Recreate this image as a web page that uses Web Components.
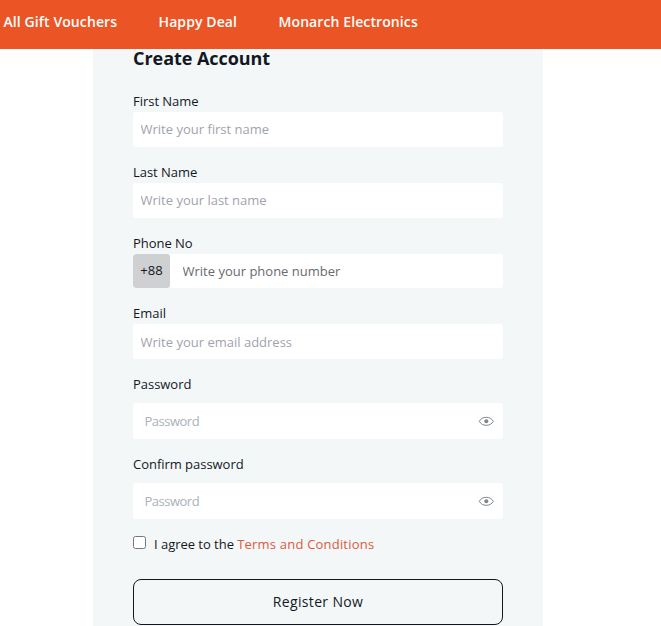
<!DOCTYPE html>
<html lang="en">
<head>
<meta charset="utf-8">
<title>Create Account</title>
<style>
body{margin:0;height:626px;overflow:hidden;background:#fff;font-family:"Open Sans","Noto Sans",sans-serif;font-size:13px;color:#14171f}
</style>
</head>
<body>
<signup-page></signup-page>
<script>
function define(name, html, setup) {
  const template = document.createElement('template');
  template.innerHTML = html;
  customElements.define(name, class extends HTMLElement {
    constructor() {
      super();
      this.attachShadow({ mode: 'open' }).appendChild(template.content.cloneNode(true));
    }
    connectedCallback() { if (setup) setup(this, this.shadowRoot); }
  });
}

define('nav-bar', `
<style>
:host{display:block;background:#eb5424;height:49px;box-sizing:border-box;padding:12px 0 0 3.5px}
nav{display:flex;gap:41.4px}
::slotted(a){color:#fff;font-size:14px;line-height:20px;font-weight:600;letter-spacing:.1px;white-space:nowrap;text-decoration:none}
</style>
<nav><slot></slot></nav>`);

define('form-field', `
<style>
:host{display:block;margin-bottom:16px}
label{display:block;height:20px;line-height:19px;letter-spacing:-.03px}
.box{display:flex;height:35px;background:#fff;border-radius:3px;overflow:hidden}
:host([prefix]) .box{height:34px}
:host([secret]) .box{height:36px;margin-top:8px}
.code{display:none;width:37px;background:#ced0d2;border-radius:3px;line-height:33px}
:host([prefix]) .code{display:block;text-align:center}
input{flex:1;min-width:0;border:0;outline:0;background:none;padding:0 8px 1px 7.5px;font:inherit;letter-spacing:0;color:inherit}
input::placeholder{color:#9fa3ad;opacity:1}
:host([type=email]) input{padding-top:1px;padding-bottom:0}
:host([prefix]) input{padding:0 8px 0 12.5px}
:host([prefix]) input::placeholder{color:#686b70}
:host([secret]) input{padding:0 8px 0 11.5px;letter-spacing:-.5px}
:host([secret]) input::placeholder{color:#a9b2b9}
svg{display:none;width:16px;height:16px;margin:10px 9px 0 0}
:host([secret]) svg{display:block}
</style>
<label for="control"></label>
<div class="box"><span class="code"></span><input id="control">
<svg viewBox="0 0 16 16" fill="none" stroke="#7d858b"><path d="M1.3 8.3C2.8 5.6 5.2 4.3 8.3 4.3S13.8 5.6 15.3 8.3C13.8 11 11.4 12.3 8.3 12.3S2.8 11 1.3 8.3Z"/><circle cx="8.3" cy="8.3" r="2" fill="#7d858b" stroke="none"/></svg></div>`,
(host, root) => {
  root.querySelector('label').textContent = host.getAttribute('label');
  root.querySelector('input').placeholder = host.getAttribute('placeholder');
  if (host.hasAttribute('secret')) root.querySelector('input').type = 'password';
  root.querySelector('.code').textContent = host.getAttribute('prefix') || '';
});

define('terms-check', `
<style>
:host{display:flex;align-items:flex-start;height:20px;margin-top:16px}
input{width:13px;height:13px;margin:1px 8px 0 0;flex:none}
label{line-height:19px;white-space:nowrap;letter-spacing:-.03px}
::slotted(a){color:#e2583a;text-decoration:none;letter-spacing:.2px}
</style>
<input type="checkbox" id="agree"><label for="agree"><slot></slot></label>`);

define('outline-button', `
<style>
:host{display:block;margin-top:24px}
button{display:block;width:100%;height:46px;padding:0;border:1px solid #14171f;border-radius:8px;background:transparent;font:14px/44px "Open Sans","Noto Sans",sans-serif;letter-spacing:.35px;color:inherit}
</style>
<button type="button"><slot></slot></button>`);

define('signup-card', `
<style>
:host{display:block;box-sizing:border-box;width:450px;height:577px;margin-left:93px;padding:0 40px;background:#f3f7f8}
h1{margin:0;height:43px;font-size:18px;line-height:19px;font-weight:700;letter-spacing:-.05px}
</style>
<h1><slot name="title"></slot></h1><slot></slot>`);

define('signup-page', `
<style>:host{display:block}</style>
<nav-bar><a href="#">All Gift Vouchers</a><a href="#">Happy Deal</a><a href="#">Monarch Electronics</a></nav-bar>
<signup-card>
<span slot="title">Create Account</span>
<form-field label="First Name" placeholder="Write your first name"></form-field>
<form-field label="Last Name" placeholder="Write your last name"></form-field>
<form-field label="Phone No" placeholder="Write your phone number" prefix="+88"></form-field>
<form-field label="Email" placeholder="Write your email address" type="email"></form-field>
<form-field label="Password" placeholder="Password" secret></form-field>
<form-field label="Confirm password" placeholder="Password" secret></form-field>
<terms-check>I agree to the <a href="#">Terms and Conditions</a></terms-check>
<outline-button>Register Now</outline-button>
</signup-card>`);
</script>
</body>
</html>
